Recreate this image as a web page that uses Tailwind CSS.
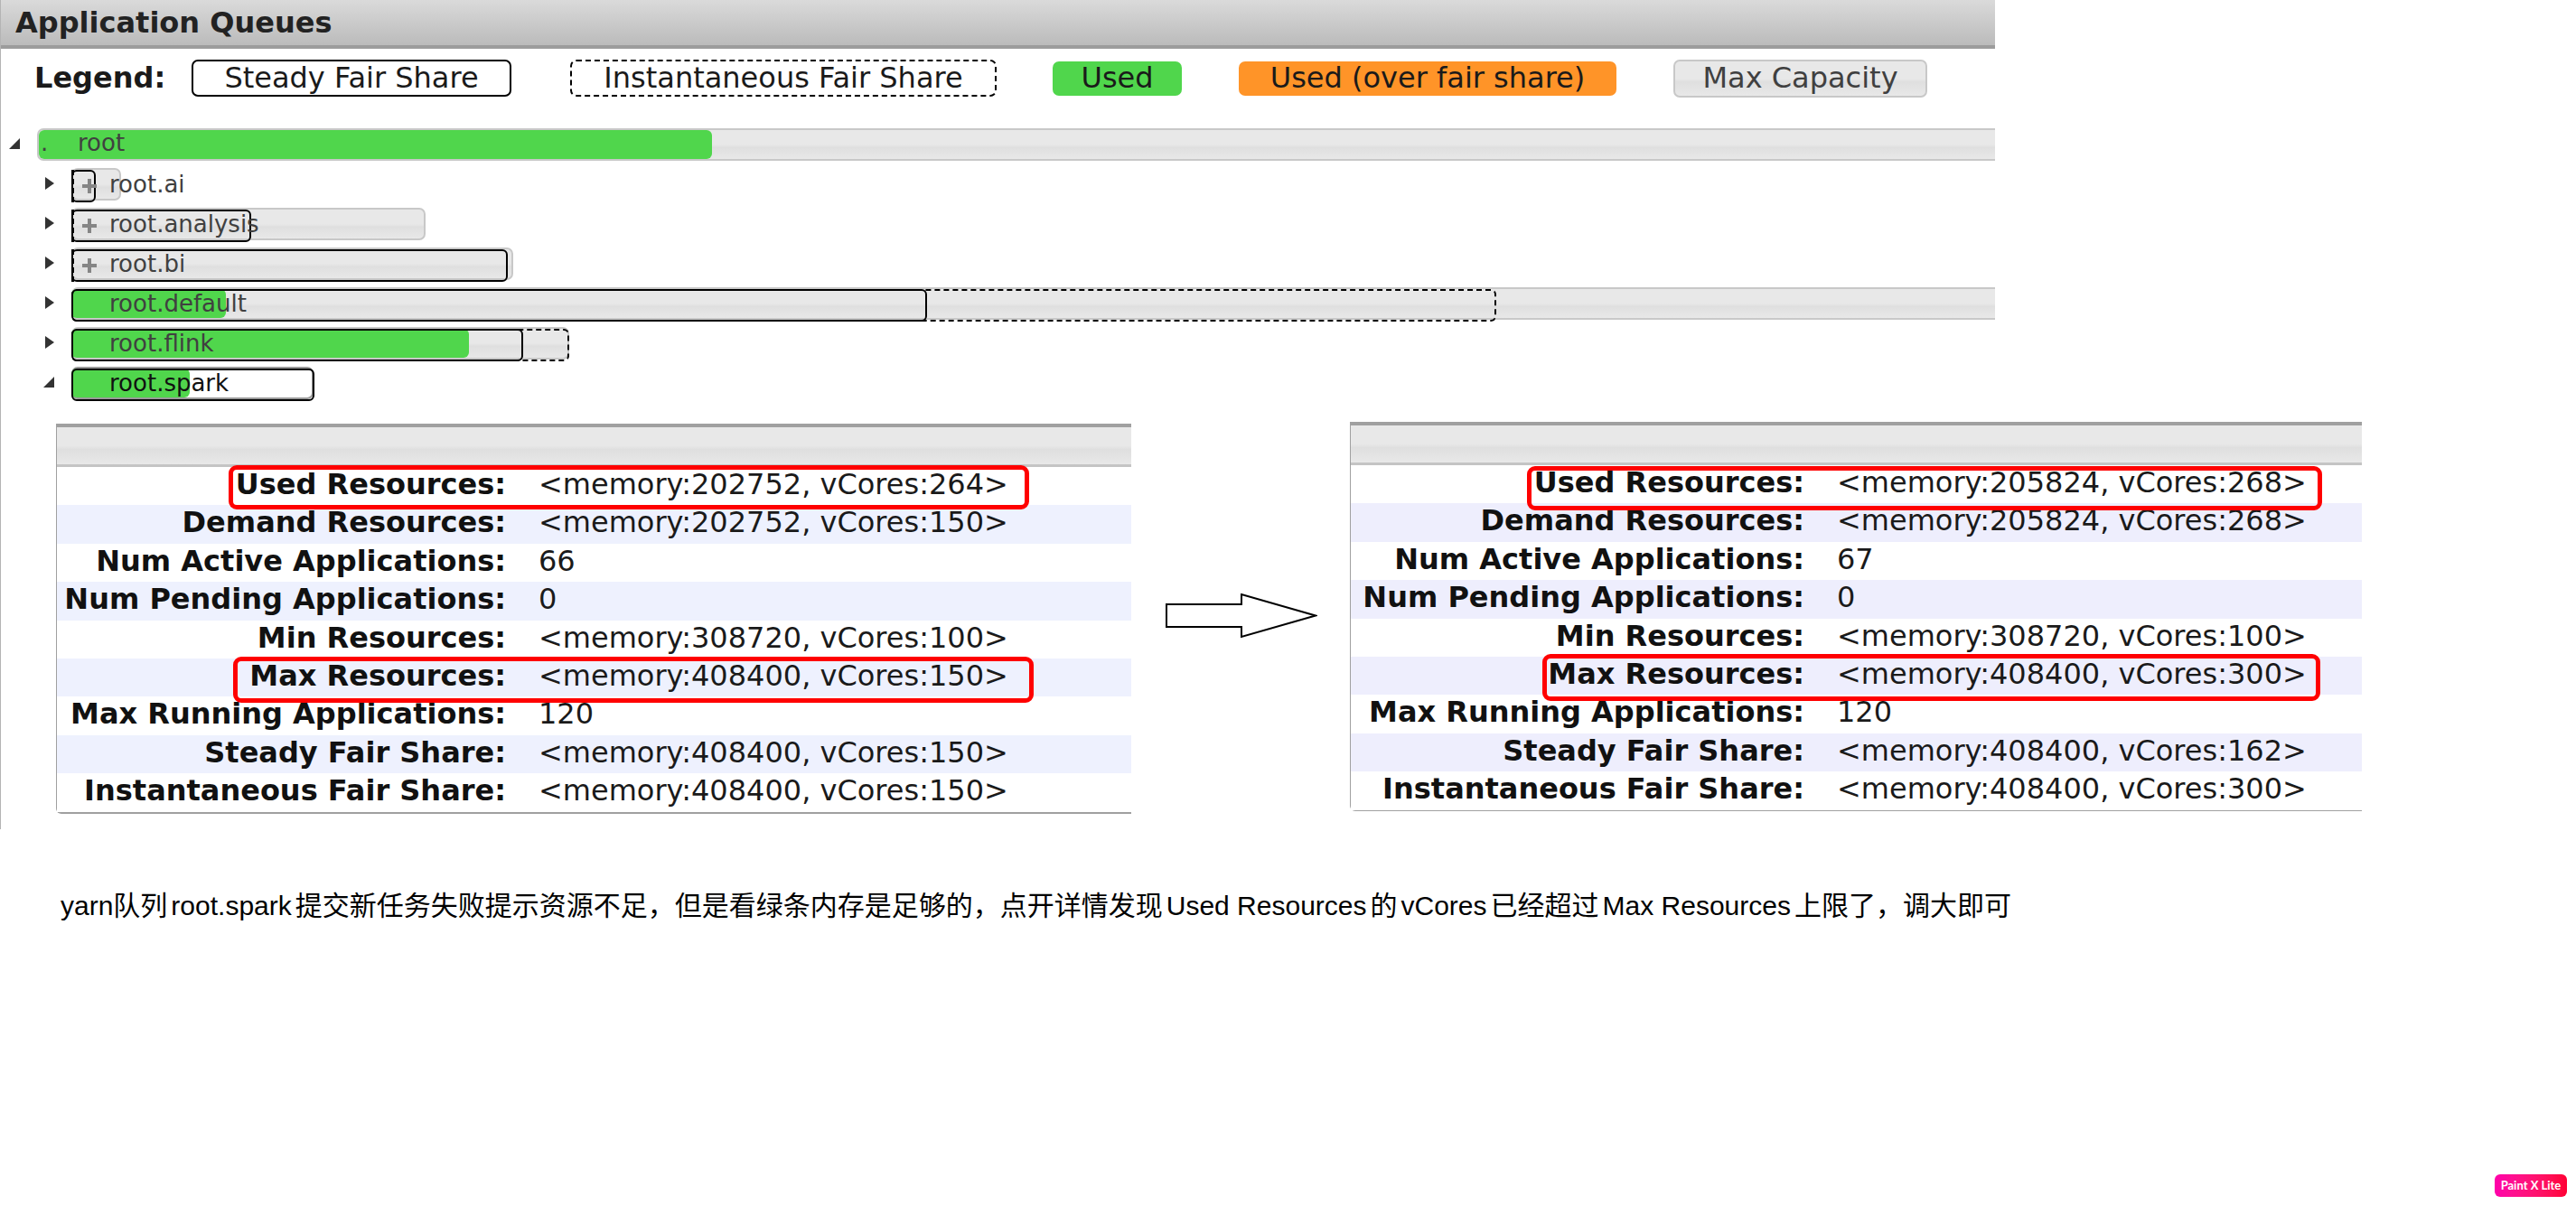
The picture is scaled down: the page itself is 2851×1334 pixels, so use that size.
<!DOCTYPE html>
<html lang="zh">
<head>
<meta charset="utf-8">
<title>Application Queues</title>
<script src="https://cdn.jsdelivr.net/npm/@tailwindcss/browser@4"></script>
</head>
<body class="bg-white">
<div class="relative w-[2851px] h-[1334px] overflow-hidden bg-white font-['DejaVu_Sans',sans-serif] text-[#1a1a1a]">

  <div class="h-[918px] border-l border-[#b4b4b4]">
    <!-- Title bar -->
    <div class="w-[2207px] h-[54px] border-b-4 border-[#9c9c9c] bg-gradient-to-b from-[#dadada] to-[#bbbbbb] pl-[16px] text-[32px] leading-[50px] font-bold text-[#222]">Application Queues</div>

    <!-- Legend -->
    <div class="relative h-[88px] w-[2207px]">
      <span class="absolute left-[37px] top-[13px] text-[32px] leading-[38px] font-bold">Legend:</span>
      <div class="absolute left-[211px] top-[12px] w-[354px] h-[41px] border-2 border-black rounded-[7px] text-center text-[32px] leading-[36px]">Steady Fair Share</div>
      <div class="absolute left-[630px] top-[12px] w-[472px] h-[41px] border-2 border-dashed border-black rounded-[7px] text-center text-[32px] leading-[36px]">Instantaneous Fair Share</div>
      <div class="absolute left-[1164px] top-[14px] w-[143px] h-[38px] bg-[#50d64c] rounded-[7px] text-center text-[32px] leading-[36px]">Used</div>
      <div class="absolute left-[1370px] top-[14px] w-[418px] h-[38px] bg-[#ff9428] rounded-[7px] text-center text-[32px] leading-[36px]">Used (over fair share)</div>
      <div class="absolute left-[1851px] top-[12px] w-[281px] h-[42px] border-2 border-[#c8c8c8] rounded-[7px] bg-[linear-gradient(#e8e8e8_50%,#dfdfdf_60%,#e8e8e8)] text-center text-[32px] leading-[36px] text-[#404040]">Max Capacity</div>
    </div>

    <!-- Queue tree -->
    <div class="w-[2207px] text-[26px] text-[#404040]">
      <div class="relative h-[44px]">
        <svg class="absolute left-[9px] top-[11px]" width="12" height="12" viewBox="0 0 12 12"><path d="M12 0V12H0Z" fill="#333"/></svg>
        <div class="absolute left-[40px] right-0 top-0 h-[36px] border-2 border-r-0 border-[#c8c8c8] rounded-l-[7px] bg-[linear-gradient(#e8e8e8_50%,#dfdfdf_60%,#e8e8e8)]"></div>
        <div class="absolute left-[42px] top-[2px] w-[745px] h-[32px] bg-[#50d64c] rounded-[6px]"></div>
        <div class="relative pl-[44px] leading-[33px] h-[36px] flex"><span class="w-[41px]">.</span><span>root</span></div>
      </div>

      <div class="relative h-[44px]">
        <svg class="absolute left-[49px] top-[10px]" width="10" height="14" viewBox="0 0 10 14"><path d="M0 0L10 7L0 14Z" fill="#333"/></svg>
        <div class="absolute left-[78px] top-0 w-[55px] h-[36px] border-2 border-[#c8c8c8] rounded-[7px] bg-[linear-gradient(#e8e8e8_50%,#dfdfdf_60%,#e8e8e8)]"></div>
        <div class="absolute left-[78px] top-[2px] w-[27px] h-[36px] border-2 border-black rounded-[6px]"></div>
        <div class="absolute left-[78px] top-[2px] w-[3px] h-[36px] border-l-3 border-dashed border-black"></div>
        <svg class="absolute left-[90px] top-[12px]" width="16" height="16" viewBox="0 0 16 16"><path d="M6 0h4v6h6v4h-6v6h-4v-6h-6v-4h6z" fill="#858585"/></svg>
        <div class="relative pl-[120px] leading-[36px]">root.ai</div>
      </div>

      <div class="relative h-[44px]">
        <svg class="absolute left-[49px] top-[10px]" width="10" height="14" viewBox="0 0 10 14"><path d="M0 0L10 7L0 14Z" fill="#333"/></svg>
        <div class="absolute left-[78px] top-0 w-[392px] h-[36px] border-2 border-[#c8c8c8] rounded-[7px] bg-[linear-gradient(#e8e8e8_50%,#dfdfdf_60%,#e8e8e8)]"></div>
        <div class="absolute left-[78px] top-[2px] w-[199px] h-[36px] border-2 border-black rounded-[6px]"></div>
        <div class="absolute left-[78px] top-[2px] w-[3px] h-[36px] border-l-3 border-dashed border-black"></div>
        <svg class="absolute left-[90px] top-[12px]" width="16" height="16" viewBox="0 0 16 16"><path d="M6 0h4v6h6v4h-6v6h-4v-6h-6v-4h6z" fill="#858585"/></svg>
        <div class="relative pl-[120px] leading-[36px]">root.analysis</div>
      </div>

      <div class="relative h-[44px]">
        <svg class="absolute left-[49px] top-[10px]" width="10" height="14" viewBox="0 0 10 14"><path d="M0 0L10 7L0 14Z" fill="#333"/></svg>
        <div class="absolute left-[78px] top-0 w-[489px] h-[36px] border-2 border-[#c8c8c8] rounded-[7px] bg-[linear-gradient(#e8e8e8_50%,#dfdfdf_60%,#e8e8e8)]"></div>
        <div class="absolute left-[78px] top-[2px] w-[483px] h-[36px] border-2 border-black rounded-[6px]"></div>
        <div class="absolute left-[78px] top-[2px] w-[3px] h-[36px] border-l-3 border-dashed border-black"></div>
        <svg class="absolute left-[90px] top-[12px]" width="16" height="16" viewBox="0 0 16 16"><path d="M6 0h4v6h6v4h-6v6h-4v-6h-6v-4h6z" fill="#858585"/></svg>
        <div class="relative pl-[120px] leading-[36px]">root.bi</div>
      </div>

      <div class="relative h-[44px]">
        <svg class="absolute left-[49px] top-[10px]" width="10" height="14" viewBox="0 0 10 14"><path d="M0 0L10 7L0 14Z" fill="#333"/></svg>
        <div class="absolute left-[78px] right-0 top-0 h-[36px] border-2 border-r-0 border-[#c8c8c8] rounded-l-[7px] bg-[linear-gradient(#e8e8e8_50%,#dfdfdf_60%,#e8e8e8)]"></div>
        <div class="absolute left-[78px] top-[2px] w-[171px] h-[32px] bg-[#50d64c] rounded-[6px]"></div>
        <div class="absolute left-[78px] top-[2px] w-[1577px] h-[36px] border-2 border-dashed border-black rounded-[6px]"></div>
        <div class="absolute left-[78px] top-[2px] w-[947px] h-[36px] border-2 border-black rounded-[6px]"></div>
        <div class="relative pl-[120px] leading-[36px]">root.default</div>
      </div>

      <div class="relative h-[44px]">
        <svg class="absolute left-[49px] top-[10px]" width="10" height="14" viewBox="0 0 10 14"><path d="M0 0L10 7L0 14Z" fill="#333"/></svg>
        <div class="absolute left-[78px] top-0 w-[551px] h-[36px] border-2 border-[#c8c8c8] rounded-[7px] bg-[linear-gradient(#e8e8e8_50%,#dfdfdf_60%,#e8e8e8)]"></div>
        <div class="absolute left-[78px] top-[2px] w-[440px] h-[32px] bg-[#50d64c] rounded-[6px]"></div>
        <div class="absolute left-[78px] top-[2px] w-[551px] h-[36px] border-2 border-dashed border-black rounded-[6px]"></div>
        <div class="absolute left-[78px] top-[2px] w-[500px] h-[36px] border-2 border-black rounded-[6px]"></div>
        <div class="relative pl-[120px] leading-[36px]">root.flink</div>
      </div>

      <div class="relative h-[44px]">
        <svg class="absolute left-[47px] top-[11px]" width="12" height="12" viewBox="0 0 12 12"><path d="M12 0V12H0Z" fill="#333"/></svg>
        <div class="absolute left-[78px] top-0 w-[268px] h-[36px] border-2 border-[#999] rounded-[7px] bg-white"></div>
        <div class="absolute left-[78px] top-[2px] w-[131px] h-[32px] bg-[#50d64c] rounded-[6px]"></div>
        <div class="absolute left-[78px] top-[2px] w-[269px] h-[36px] border-2 border-black rounded-[6px]"></div>
        <div class="relative pl-[120px] leading-[36px] text-[#111]">root.spark</div>
      </div>
    </div>

    <!-- Detail tables with arrow between them -->
    <div class="flex items-start pl-[61px] pt-[19px] text-[32px]">
      <div class="relative w-[1190px] h-[432px] border-l border-b-[3px] border-[#a0a0a0] rounded-bl-[6px]">
        <div class="h-[48px] border-t-[4px] border-b-[3px] border-t-[#a0a0a0] border-b-[#c4c4c4] bg-[linear-gradient(#e8e8e8_50%,#dfdfdf_60%,#e8e8e8)]"></div>
        <div class="grid grid-cols-[497px_1fr] gap-x-[36px] auto-rows-[42.4px] leading-[38px] bg-white [&>b]:text-right [&>b]:text-[#111]">
          <b>Used Resources:</b><span>&lt;memory:202752, vCores:264&gt;</span>
          <b class="bg-[#eef1fe] -mr-[36px] pr-[36px]">Demand Resources:</b><span class="bg-[#eef1fe]">&lt;memory:202752, vCores:150&gt;</span>
          <b>Num Active Applications:</b><span>66</span>
          <b class="bg-[#eef1fe] -mr-[36px] pr-[36px]">Num Pending Applications:</b><span class="bg-[#eef1fe]">0</span>
          <b>Min Resources:</b><span>&lt;memory:308720, vCores:100&gt;</span>
          <b class="bg-[#eef1fe] -mr-[36px] pr-[36px]">Max Resources:</b><span class="bg-[#eef1fe]">&lt;memory:408400, vCores:150&gt;</span>
          <b>Max Running Applications:</b><span>120</span>
          <b class="bg-[#eef1fe] -mr-[36px] pr-[36px]">Steady Fair Share:</b><span class="bg-[#eef1fe]">&lt;memory:408400, vCores:150&gt;</span>
          <b>Instantaneous Fair Share:</b><span>&lt;memory:408400, vCores:150&gt;</span>
        </div>
        <div class="absolute left-[190px] top-[46px] w-[886px] h-[49px] border-[5px] border-[#ff0000] rounded-[9px]"></div>
        <div class="absolute left-[195px] top-[258px] w-[886px] h-[51px] border-[5px] border-[#ff0000] rounded-[9px]"></div>
      </div>

      <svg class="ml-[38px] mt-[188px]" width="168" height="50" viewBox="0 0 168 50"><path d="M1 12H84V1L166 24.5L84 48V37H1Z" fill="#fff" stroke="#000" stroke-width="2"/></svg>

      <div class="relative ml-[36px] -mt-[2px] w-[1120px] h-[431px] border-l border-b-[3px] border-[#a0a0a0] rounded-bl-[6px]">
        <div class="h-[48px] border-t-[4px] border-b-[3px] border-t-[#a0a0a0] border-b-[#c4c4c4] bg-[linear-gradient(#e8e8e8_50%,#dfdfdf_60%,#e8e8e8)]"></div>
        <div class="grid grid-cols-[502px_1fr] gap-x-[36px] auto-rows-[42.4px] leading-[38px] bg-white [&>b]:text-right [&>b]:text-[#111]">
          <b>Used Resources:</b><span>&lt;memory:205824, vCores:268&gt;</span>
          <b class="bg-[#eeeefd] -mr-[36px] pr-[36px]">Demand Resources:</b><span class="bg-[#eeeefd]">&lt;memory:205824, vCores:268&gt;</span>
          <b>Num Active Applications:</b><span>67</span>
          <b class="bg-[#eeeefd] -mr-[36px] pr-[36px]">Num Pending Applications:</b><span class="bg-[#eeeefd]">0</span>
          <b>Min Resources:</b><span>&lt;memory:308720, vCores:100&gt;</span>
          <b class="bg-[#eeeefd] -mr-[36px] pr-[36px]">Max Resources:</b><span class="bg-[#eeeefd]">&lt;memory:408400, vCores:300&gt;</span>
          <b>Max Running Applications:</b><span>120</span>
          <b class="bg-[#eeeefd] -mr-[36px] pr-[36px]">Steady Fair Share:</b><span class="bg-[#eeeefd]">&lt;memory:408400, vCores:162&gt;</span>
          <b>Instantaneous Fair Share:</b><span>&lt;memory:408400, vCores:300&gt;</span>
        </div>
        <div class="absolute left-[195px] top-[49px] w-[880px] h-[49px] border-[5px] border-[#ff0000] rounded-[9px]"></div>
        <div class="absolute left-[212px] top-[257px] w-[861px] h-[52px] border-[5px] border-[#ff0000] rounded-[9px]"></div>
      </div>
    </div>
  </div>

  <!-- Caption -->
  <p class="pl-[67px] pt-[66px] whitespace-nowrap font-['Liberation_Sans','Noto_Sans_CJK_SC',sans-serif] text-[30px] leading-[38px] text-black">yarn队列<span class="ml-[4px]">root.spark</span><span class="ml-[4px]">提交新任务失败提示资源不足，但是看绿条内存是足够的，点开详情发现</span><span class="ml-[4px]">Used Resources</span><span class="ml-[4px]">的</span><span class="ml-[4px]">vCores</span><span class="ml-[4px]">已经超过</span><span class="ml-[4px]">Max Resources</span><span class="ml-[4px]">上限了，调大即可</span></p>

  <!-- Watermark badge -->
  <div class="absolute left-[2761px] top-[1300px] w-[80px] h-[25px] rounded-[6px] bg-gradient-to-r from-[#ff00aa] to-[#ff0033] text-center font-['Lato',sans-serif] text-[13px] leading-[25px] font-bold text-white">Paint X Lite</div>
</div>
</body>
</html>
